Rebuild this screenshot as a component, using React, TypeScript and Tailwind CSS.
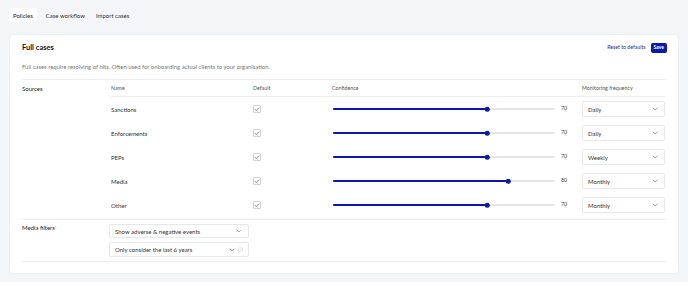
import { ChevronDown, Info } from "lucide-react";

const sources = [
  { name: "Sanctions", value: 70, freq: "Daily" },
  { name: "Enforcements", value: 70, freq: "Daily" },
  { name: "PEPs", value: 70, freq: "Weekly" },
  { name: "Media", value: 80, freq: "Monthly" },
  { name: "Other", value: 70, freq: "Monthly" },
];

function Select({ label, width, info }: { label: string; width: string; info?: boolean }) {
  return (
    <div className={`${width} flex items-center justify-between rounded-[2px] border border-[#e6e7eb] bg-white pl-[5px] pr-[5px]`}>
      <span className="text-[6px] text-[#333]">{label}</span>
      <span className="flex items-center gap-[2px]">
        <ChevronDown className="h-[8px] w-[8px] text-[#555]" strokeWidth={1.5} />
        {info && <Info className="h-[5px] w-[5px] text-[#ccc]" strokeWidth={2} />}
      </span>
    </div>
  );
}

export default function App() {
  return (
    <div
      className="min-h-[282px] bg-[#f4f5f7] px-[9px] pt-[8px] text-[5.5px] text-[#333]"
      style={{ fontFamily: "Lato, 'Liberation Sans', sans-serif" }}
    >
      <div className="flex h-[14px] items-center">
        <div className="flex h-full items-center rounded-[2px] bg-white px-[4px] text-[6px] text-[#222]">Policies</div>
        <div className="ml-[9px] text-[6px] text-[#333]">Case workflow</div>
        <div className="ml-[11px] text-[6px] text-[#333]">Import cases</div>
      </div>

      <div className="mt-[12px] rounded-[4px] border border-[#eceef1] bg-white px-[12px] pb-[11px] pt-[8px]">
        <div className="flex h-[10px] items-center justify-between">
          <h1 className="text-[7.5px] font-bold text-[#111]">Full cases</h1>
          <div className="-mr-[1px] flex items-center gap-[5px]">
            <span className="text-[5.2px] text-[#1b2a8c]">Reset to defaults</span>
            <button className="flex h-[10px] items-center rounded-[2px] bg-[#0b1aa6] px-[3px] text-[5px] font-bold text-white">
              Save
            </button>
          </div>
        </div>

        <p className="mt-[10px] pb-[8px] text-[5.9px] leading-[8px] text-[#777]">
          Full cases require resolving of hits. Often used for onboarding actual clients to your organisation.
        </p>

        <div className="flex border-t border-[#eceef1] pb-[2px]">
          <div className="w-[89px] pt-[5px] text-[6px] leading-[8px] text-[#222]">Sources</div>
          <div className="flex-1">
            <div className="flex h-[17px] items-center border-b border-[#eceef1] pt-[1px] text-[5.3px] text-[#555]">
              <div className="w-[142px]">Name</div>
              <div className="w-[79px]">Default</div>
              <div className="w-[250px]">Confidence</div>
              <div>Monitoring frequency</div>
            </div>
            {sources.map((s) => (
              <div key={s.name} className="flex h-[24px] items-center">
                <div className="w-[142px] text-[6px] text-[#333]">{s.name}</div>
                <div className="w-[79px]">
                  <div className="flex h-[8px] w-[8px] items-center justify-center rounded-[1px] border border-[#cfd2d6] bg-white">
                    <svg viewBox="0 0 8 8" className="h-[6px] w-[6px]">
                      <path d="M1.2 4.2 L3 6 L6.8 2" fill="none" stroke="#555" strokeWidth="0.9" />
                    </svg>
                  </div>
                </div>
                <div className="flex w-[250px] items-center">
                  <div className="relative ml-[1px] h-[2px] w-[222px] rounded-full bg-[#e3e4e7]">
                    <div
                      className="h-full rounded-full bg-[#0b1aa6]"
                      style={{ width: `${s.value === 80 ? 79 : 69.5}%` }}
                    />
                    <div
                      className="absolute top-1/2 h-[4.5px] w-[4.5px] -translate-x-1/2 -translate-y-1/2 rounded-full bg-[#0b1aa6]"
                      style={{ left: `${s.value === 80 ? 79 : 69.5}%` }}
                    />
                  </div>
                  <span className="ml-[6px] text-[5.3px] text-[#444]">{s.value}</span>
                </div>
                <Select label={s.freq} width="w-[83px] h-[16px]" />
              </div>
            ))}
          </div>
        </div>

        <div className="flex border-t border-b border-[#eceef1] pb-[4px] pt-[4px]">
          <div className="w-[87px] text-[6px] leading-[8px] text-[#222]">Media filters</div>
          <div className="flex flex-col gap-[4px]">
            <Select label="Show adverse & negative events" width="w-[140px] h-[14px]" />
            <Select label="Only consider the last 6 years" width="w-[140px] h-[15px]" info />
          </div>
        </div>
      </div>
    </div>
  );
}
